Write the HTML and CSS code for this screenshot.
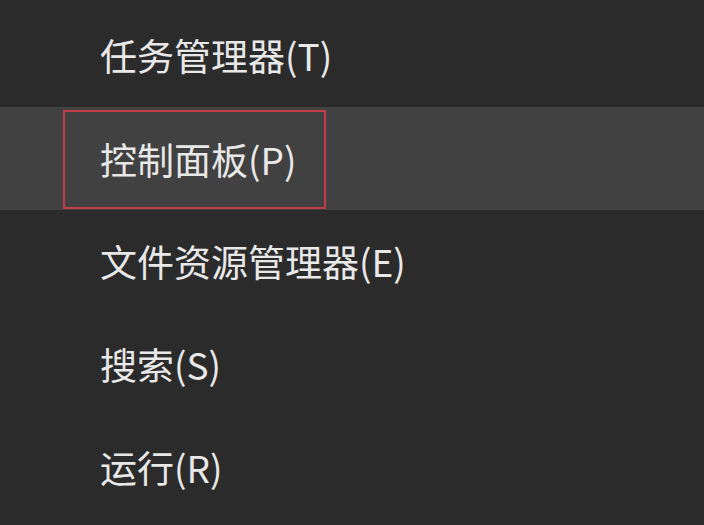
FILE: index.html
```html
<!DOCTYPE html>
<html lang="zh-CN">
<head>
<meta charset="utf-8">
<link rel="stylesheet" href="styles.css">
</head>
<body>
<ul class="menu">
  <li class="item"><span class="label">任务管理器(T)</span></li>
  <li class="item item-hover"><span class="label label-marked">控制面板(P)</span></li>
  <li class="item"><span class="label">文件资源管理器(E)</span></li>
  <li class="item"><span class="label">搜索(S)</span></li>
  <li class="item"><span class="label">运行(R)</span></li>
</ul>
</body>
</html>
```
FILE: styles.css
```css
html, body {
  margin: 0;
  padding: 0;
  background: #2b2b2b;
  width: 704px;
  height: 525px;
  overflow: hidden;
}
.menu {
  list-style: none;
  margin: 0;
  padding: 4px 0 0 0;
  font-family: "Noto Sans CJK SC", "Noto Sans", sans-serif;
  font-size: 37px;
  color: #e8e8e8;
}
.item {
  height: 103px;
  display: flex;
  align-items: center;
  padding-left: 63px;
}
.label {
  display: flex;
  align-items: center;
  padding-left: 37px;
  line-height: 1;
}
.item-hover {
  background: #414141;
  align-items: flex-start;
}
.label-marked {
  box-sizing: border-box;
  width: 263px;
  height: 99px;
  margin-top: 3px;
  padding-left: 35px;
  border: 2px solid #c43c48;
}
```
